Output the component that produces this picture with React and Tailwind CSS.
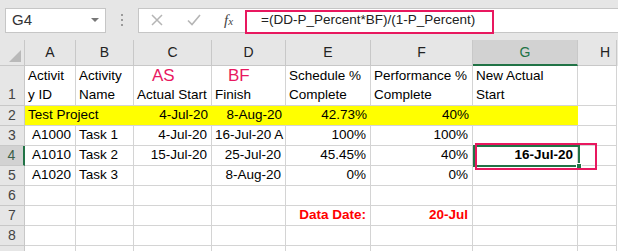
import React from 'react';

const font = { fontFamily: '"Liberation Sans", Arial, sans-serif' };

const widths = [51, 58, 78, 74, 85, 102, 105, 39];
const letters = ['A', 'B', 'C', 'D', 'E', 'F', 'G', 'H'];

// each row: list of cells, one per column
const rows = [
  { n: 3, cells: [['A1000', 'r'], ['Task 1'], ['4-Jul-20', 'r'], ['16-Jul-20 A'], ['100%', 'r'], ['100%', 'r'], [''], ['']] },
  { n: 4, cells: [['A1010', 'r'], ['Task 2'], ['15-Jul-20', 'r'], ['25-Jul-20', 'r'], ['45.45%', 'r'], ['40%', 'r'], ['16-Jul-20', 'rb'], ['']] },
  { n: 5, cells: [['A1020', 'r'], ['Task 3'], [''], ['8-Aug-20', 'r'], ['0%', 'r'], ['0%', 'r'], [''], ['']] },
  { n: 6, cells: [[''], [''], [''], [''], [''], [''], [''], ['']] },
  { n: 7, cells: [[''], [''], [''], [''], ['Data Date:', 'red'], ['20-Jul', 'rred'], [''], ['']] },
  { n: 8, cells: [[''], [''], [''], [''], [''], [''], [''], ['']] },
  { n: '', cells: [[''], [''], [''], [''], [''], [''], [''], ['']] },
];

const Cell = ({ w, text, kind = '' }) => {
  const right = kind.startsWith('r');
  const bold = kind.includes('b') || kind.includes('red');
  const red = kind.includes('red');
  return (
    <div
      style={{ width: w }}
      className={`h-full shrink-0 border-r border-b border-[#d4d4d4] flex items-center whitespace-nowrap ${right ? 'justify-end pr-[4px]' : 'pl-[3px]'} ${bold ? 'font-bold' : ''} ${red ? 'text-[#ff0000]' : 'text-black'}`}
    >
      {text}
    </div>
  );
};

const RowHead = ({ n, active }) => (
  <div
    className={`w-[25px] h-full shrink-0 flex items-center justify-center border-b border-[#c8c8c8] text-[14px] ${active ? 'bg-[#d2d2d2] border-r-2 border-r-[#217346] text-[#3b5f48]' : 'bg-[#e6e6e6] border-r border-r-[#c8c8c8] text-[#444]'}`}
  >
    {n}
  </div>
);

export default function App() {
  return (
    <div style={font} className="relative w-[618px] h-[251px] overflow-hidden bg-white text-[13.5px]">
      {/* formula bar */}
      <div className="h-[40px] bg-[#e6e6e6] flex items-center pl-[5px] pt-[5px] pb-[5px]">
        <div className="w-[101px] h-[25px] bg-white border border-[#c6c6c6] flex items-center justify-between pl-[6px] pr-[6px] text-[#333] text-[15px]">
          <span>G4</span>
          <svg width="8" height="5" viewBox="0 0 8 5"><path d="M0 0h8L4 4z" fill="#777" /></svg>
        </div>
        <div className="w-[32px] flex flex-col items-center gap-[3px]">
          <span className="w-[2px] h-[2px] bg-[#9a9a9a]" />
          <span className="w-[2px] h-[2px] bg-[#9a9a9a]" />
          <span className="w-[2px] h-[2px] bg-[#9a9a9a]" />
        </div>
        <div className="flex-1 h-[25px] bg-white border-y border-l border-[#c6c6c6] flex items-center">
          <svg width="12" height="12" viewBox="0 0 12 12" className="ml-[12px]">
            <path d="M1 1l10 10M11 1L1 11" stroke="#b5b5b5" strokeWidth="1.5" />
          </svg>
          <svg width="14" height="12" viewBox="0 0 14 12" className="ml-[24px]">
            <path d="M1 6.5l4 4L13 1" stroke="#b5b5b5" strokeWidth="1.6" fill="none" />
          </svg>
          <span className="ml-[23px] text-[#444] italic text-[15px]" style={{ fontFamily: '"Liberation Serif", serif' }}>
            f<span className="text-[11px]">x</span>
          </span>
          <span className="ml-[28px] text-[#222] text-[13.5px]">=(DD-P_Percent*BF)/(1-P_Percent)</span>
        </div>
      </div>

      {/* column headers */}
      <div className="flex h-[26px] bg-[#e6e6e6] text-[14px]">
        <div className="w-[25px] h-full shrink-0 border-r border-b border-[#c8c8c8] flex items-end justify-end p-[3px]">
          <svg width="12" height="12" viewBox="0 0 12 12"><path d="M12 0v12H0z" fill="#b9b9b9" /></svg>
        </div>
        {letters.map((l, i) => (
          <div
            key={l}
            style={{ width: widths[i] }}
            className={`h-full shrink-0 flex items-center justify-center ${l === 'G' ? 'bg-[#d2d2d2] border-b-2 border-b-[#217346] text-[#217346] border-r border-r-[#c8c8c8]' : 'border-r border-b border-[#c8c8c8] text-[#222]'} ${l === 'H' ? 'justify-start pl-[22px]' : ''}`}
          >
            {l}
          </div>
        ))}
      </div>

      {/* row 1 */}
      <div className="flex h-[40px]">
        <div className="w-[25px] h-full shrink-0 flex items-end justify-center pb-[1px] leading-[20px] bg-[#e6e6e6] border-r border-b border-[#c8c8c8] text-[#444] text-[14px]">1</div>
        {[
          ['Activit', 'y ID'],
          ['Activity', 'Name'],
          ['AS', 'Actual Start'],
          ['BF', 'Finish'],
          ['Schedule %', 'Complete'],
          ['Performance %', 'Complete'],
          ['New Actual', 'Start'],
          ['', ''],
        ].map(([a, b], i) => (
          <div
            key={i}
            style={{ width: widths[i] }}
            className="h-full shrink-0 border-r border-b border-[#d4d4d4] flex flex-col justify-end pl-[3px] whitespace-nowrap leading-[19px] pb-[1px]"
          >
            {a === 'AS' || a === 'BF' ? (
              <span className={`text-[#e8185f] text-[17px] leading-[19px] ${a === 'AS' ? 'pl-[15px]' : 'pl-[13px]'}`}>{a}</span>
            ) : (
              <span>{a}</span>
            )}
            <span>{b}</span>
          </div>
        ))}
      </div>

      {/* row 2 */}
      <div className="flex h-[20px]">
        <RowHead n={2} />
        <div style={{ width: 109 }} className="h-full shrink-0 bg-[#ffff00] border-b border-[#d4d4d4] flex items-center pl-[3px] whitespace-nowrap">Test Project</div>
        {['4-Jul-20', '8-Aug-20', '42.73%', '40%', ''].map((t, i) => (
          <div key={i} style={{ width: widths[i + 2] }} className="h-full shrink-0 bg-[#ffff00] border-b border-[#d4d4d4] flex items-center justify-end pr-[4px] whitespace-nowrap">
            {t}
          </div>
        ))}
        <Cell w={widths[7]} text="" />
      </div>

      {rows.map((r, idx) => (
        <div key={idx} className="flex h-[20px]">
          <RowHead n={r.n} active={r.n === 4} />
          {r.cells.map(([t, k], i) => (
            <Cell key={i} w={widths[i]} text={t} kind={k} />
          ))}
        </div>
      ))}

      {/* selection of G4 */}
      <div className="absolute left-[473px] top-[145px] w-[107px] h-[22px] border-2 border-[#217346] pointer-events-none" />
      <div className="absolute left-[576px] top-[163px] w-[6px] h-[6px] bg-[#217346] border border-white" />

      {/* pink annotation boxes */}
      <div className="absolute left-[245px] top-[10px] w-[249px] h-[24px] border-[2.5px] border-[#e8185f]" />
      <div className="absolute left-[475px] top-[143px] w-[122px] h-[27px] border-[2.5px] border-[#e8185f]" />
    </div>
  );
}
